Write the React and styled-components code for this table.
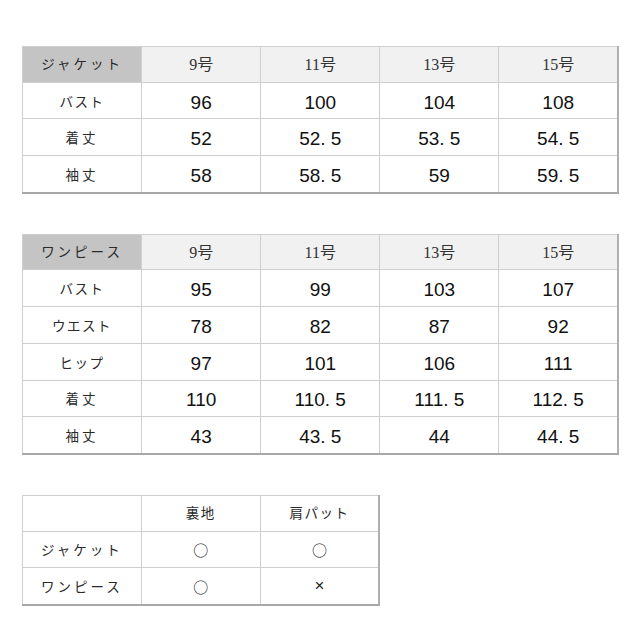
import styled, { createGlobalStyle } from 'styled-components'

const Global = createGlobalStyle`
	body {
		margin: 0;
		background: #fff;
	}
`

const Root = styled.div`
	width: 640px;
	height: 640px;
	padding: 46px 0 0 22px;
	box-sizing: border-box;
	display: flex;
	flex-direction: column;
	gap: 40px;
`

const Table = styled.table`
	border-collapse: collapse;
	table-layout: fixed;
	width: ${(p) => p.$cols * 119.4}px;
	border-right: 2px solid #b0b0b0;
	border-bottom: 2px solid #a8a8a8;
	border-top: 1px solid #c4c4c4;
	border-left: 1px solid #c4c4c4;
`

const Cell = styled.td`
	height: 35.7px;
	padding: 0;
	border: 1px solid #cfcfcf;
	text-align: center;
	vertical-align: middle;
	color: #1a1a1a;
`

const HeadCell = styled(Cell)`
	background: ${(p) => (p.$corner ? '#c4c4c4' : '#f1f1f1')};
	font-family: 'Liberation Serif', 'Noto Sans CJK JP', serif;
	font-size: 16px;
	color: #333;
	padding-bottom: 3px;
	box-sizing: border-box;
	${(p) => p.$blank && 'background: #fff;'}
`

const Label = styled.span`
	font-family: 'Noto Sans CJK JP', sans-serif;
	font-size: 13.5px;
	letter-spacing: ${(p) => (p.$wide ? '3px' : '1.5px')};
	color: #2a2a2a;
`

const Num = styled(Cell)`
	font-family: 'Liberation Sans', Arial, sans-serif;
	font-size: 19px;
	color: #111;
	padding-top: 4px;
	box-sizing: border-box;
`

const Dot = styled.span`
	display: inline-block;
	width: 10.5px;
	text-align: left;
`

const Mark = styled(Cell)`
	font-family: ${(p) => (p.$cross ? "'Liberation Sans', sans-serif" : "'Noto Sans CJK JP', sans-serif")};
	font-size: ${(p) => (p.$cross ? '17px' : '15px')};
	color: #222;
`

const sizes = ['9号', '11号', '13号', '15号']

const jacket = [
	['バスト', '96', '100', '104', '108'],
	['着丈', '52', '52.5', '53.5', '54.5'],
	['袖丈', '58', '58.5', '59', '59.5'],
]

const onepiece = [
	['バスト', '95', '99', '103', '107'],
	['ウエスト', '78', '82', '87', '92'],
	['ヒップ', '97', '101', '106', '111'],
	['着丈', '110', '110.5', '111.5', '112.5'],
	['袖丈', '43', '43.5', '44', '44.5'],
]

const Value = ({ v }) => {
	const [a, b] = v.split('.')
	return (
		<Num>
			{a}
			{b !== undefined && (
				<>
					<Dot>.</Dot>
					{b}
				</>
			)}
		</Num>
	)
}

const SizeTable = ({ title, rows }) => (
	<Table $cols={5}>
		<tbody>
			<tr>
				<HeadCell $corner>
					<Label $wide>{title}</Label>
				</HeadCell>
				{sizes.map((s) => (
					<HeadCell key={s}>{s}</HeadCell>
				))}
			</tr>
			{rows.map(([label, ...vals]) => (
				<tr key={label}>
					<Cell>
						<Label $wide={label.length <= 2}>{label}</Label>
					</Cell>
					{vals.map((v, i) => (
						<Value key={i} v={v} />
					))}
				</tr>
			))}
		</tbody>
	</Table>
)

const App = () => {
	return (
		<Root>
			<Global />
			<SizeTable title='ジャケット' rows={jacket} />
			<SizeTable title='ワンピース' rows={onepiece} />
			<Table $cols={3}>
				<tbody>
					<tr>
						<HeadCell $blank />
						<HeadCell $blank>
							<Label>裏地</Label>
						</HeadCell>
						<HeadCell $blank>
							<Label>肩パット</Label>
						</HeadCell>
					</tr>
					<tr>
						<Cell>
							<Label $wide>ジャケット</Label>
						</Cell>
						<Mark>○</Mark>
						<Mark>○</Mark>
					</tr>
					<tr>
						<Cell>
							<Label $wide>ワンピース</Label>
						</Cell>
						<Mark>○</Mark>
						<Mark $cross>×</Mark>
					</tr>
				</tbody>
			</Table>
		</Root>
	)
}

export default App
